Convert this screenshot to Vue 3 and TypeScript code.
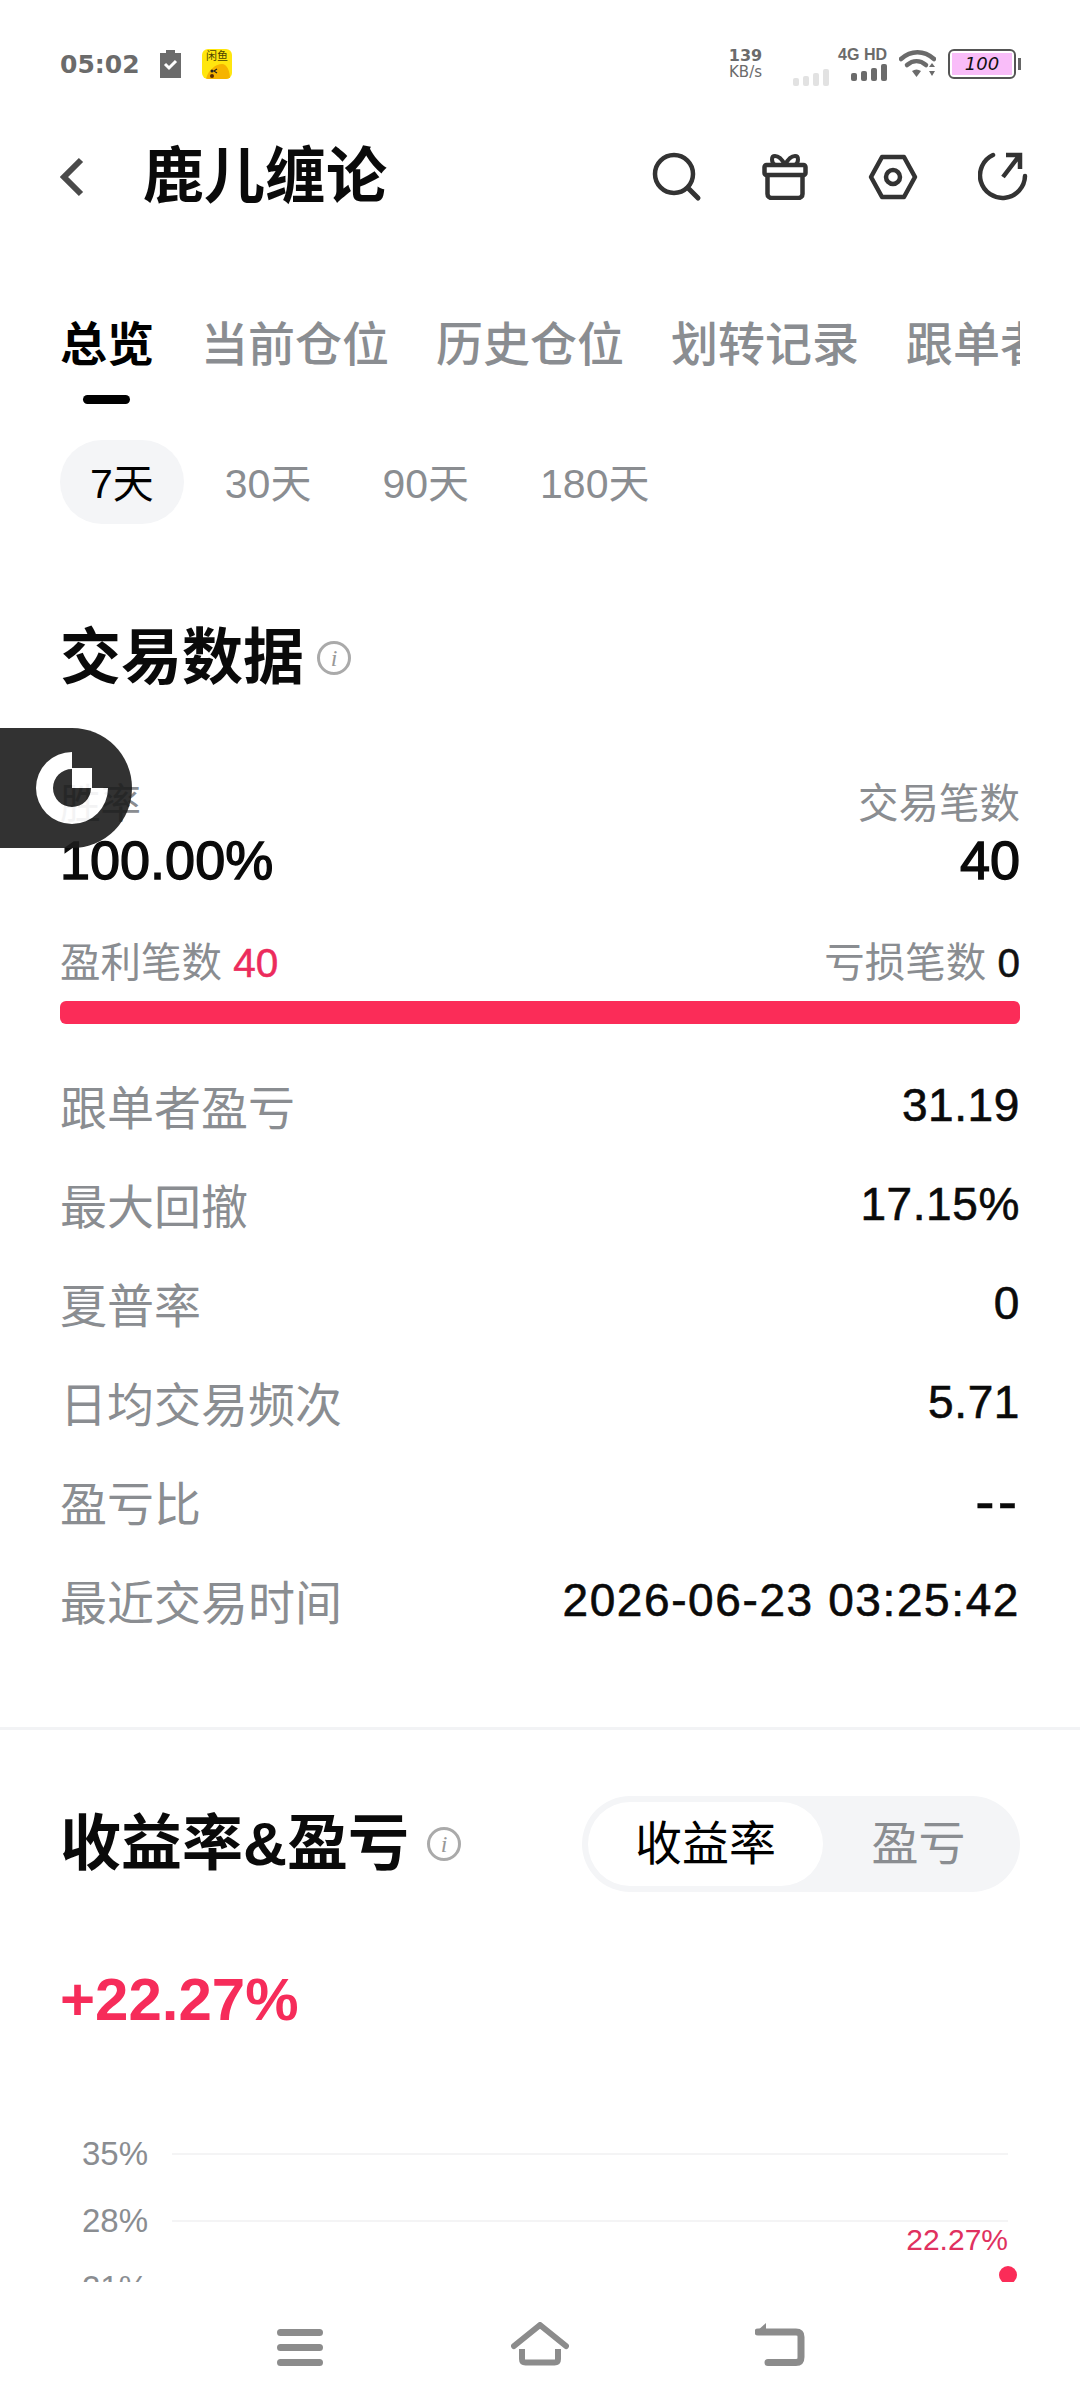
<template>
  <div class="page">
    <div class="main">
      <!-- 状态栏 -->
      <div class="status">
        <div class="status-left">
          <span class="time">05:02</span>
          <svg class="clip" width="21" height="28" viewBox="0 0 21 28">
            <path d="M0 3h6V0h9v3h6v25H0z" fill="#6b6b6b" />
            <path d="M5 14l4 4 7-7" fill="none" stroke="#fff" stroke-width="3" />
          </svg>
          <div class="fish">
            <span class="fish-name">闲鱼</span>
            <svg class="fish-face" width="30" height="15" viewBox="0 0 30 15">
              <path d="M4 15C6 6 14 0 20 0c5 0 8 7 8 15z" fill="#f6b400" />
              <circle cx="10" cy="7" r="1.5" fill="#222" />
              <path d="M15 5l-3 2 3 2" fill="none" stroke="#222" stroke-width="1.2" />
              <circle cx="10" cy="12" r="2" fill="#5b2b00" />
            </svg>
          </div>
        </div>
        <div class="status-right">
          <div class="speed"><span>139</span><span class="unit">KB/s</span></div>
          <div class="bars off">
            <i v-for="h in [8, 10, 13, 17]" :key="h" :style="{ height: h + 'px' }"></i>
          </div>
          <div class="net">
            <span>4G HD</span>
            <div class="bars">
              <i v-for="h in [8, 10, 13, 17]" :key="h" :style="{ height: h + 'px' }"></i>
            </div>
          </div>
          <svg width="37" height="30" viewBox="0 0 37 30">
            <path d="M2 10c10-9 23-9 33 0" fill="none" stroke="#6b6b6b" stroke-width="4.500" stroke-linecap="round" />
            <path d="M8 16c6-5 13-5 19 0" fill="none" stroke="#6b6b6b" stroke-width="4.500" stroke-linecap="round" />
            <path d="M13 22c3-2 6-2 9 0l-4.500 6z" fill="#6b6b6b" />
            <path d="M30 18l3-4 3 4zM30 22l3 5 3-5z" fill="#6b6b6b" />
          </svg>
          <div class="battery">
            <div class="battery-fill">100</div>
          </div>
          <div class="battery-tip"></div>
        </div>
      </div>

      <!-- 标题栏 -->
      <div class="header">
        <svg width="24" height="40" viewBox="0 0 24 40">
          <path d="M21 3L4 20l17 17" fill="none" stroke="#4a4a4a" stroke-width="6" />
        </svg>
        <h1 class="title">鹿儿缠论</h1>
        <div class="header-icons">
          <svg width="50" height="50" viewBox="0 0 50 50">
            <circle cx="22" cy="22" r="19" fill="none" stroke="#333" stroke-width="4.500" />
            <path d="M36 36l10 10" stroke="#333" stroke-width="5" stroke-linecap="round" />
          </svg>
          <svg width="46" height="46" viewBox="0 0 46 46">
            <rect x="2.500" y="11" width="41" height="10" rx="2" fill="none" stroke="#333" stroke-width="4.500" />
            <path d="M5.500 21v19c0 2.500 2 4 4 4h27c2 0 4-1.500 4-4V21" fill="none" stroke="#333" stroke-width="4.500" />
            <path d="M23 11c-3-6-7-9-10-9-4 0-4 6 0 9M23 11c3-6 7-9 10-9 4 0 4 6 0 9" fill="none" stroke="#333" stroke-width="4" />
          </svg>
          <svg width="50" height="46" viewBox="0 0 50 46">
            <path d="M14 3h22l11 20-11 20H14L3 23z" fill="none" stroke="#333" stroke-width="4.500" stroke-linejoin="round" />
            <circle cx="25" cy="23" r="7" fill="none" stroke="#333" stroke-width="4.500" />
          </svg>
          <svg width="50" height="50" viewBox="0 0 50 50">
            <path d="M15 3A22.500 22.500 0 1 0 47 24" fill="none" stroke="#333" stroke-width="4.500" stroke-linecap="round" />
            <path d="M25 25L41 4M28 3h14v14" fill="none" stroke="#333" stroke-width="4.500" />
          </svg>
        </div>
      </div>

      <!-- 标签 -->
      <div class="tabs">
        <div v-for="(t, i) in tabs" :key="t" class="tab" :class="{ active: i === 0 }">{{ t }}</div>
      </div>

      <div class="periods">
        <div v-for="(p, i) in periods" :key="p" class="period" :class="{ active: i === 0 }">{{ p }}</div>
      </div>

      <!-- 交易数据 -->
      <div class="section-title first">
        <h2>交易数据</h2>
        <span class="info">i</span>
      </div>

      <div class="summary">
        <div>
          <div class="summary-label">胜率</div>
          <div class="summary-value">100.00%</div>
        </div>
        <div class="right">
          <div class="summary-label">交易笔数</div>
          <div class="summary-value">40</div>
        </div>
      </div>

      <div class="counts">
        <span>盈利笔数 <b class="red">40</b></span>
        <span>亏损笔数 <b class="dark">0</b></span>
      </div>
      <div class="bar"></div>

      <div class="rows">
        <div v-for="r in stats" :key="r.label" class="row">
          <span class="row-label">{{ r.label }}</span>
          <span class="row-value" :class="r.kind">{{ r.value }}</span>
        </div>
      </div>

      <div class="divider"></div>

      <!-- 收益率 -->
      <div class="profit-head">
        <div class="section-title">
          <h2>收益率&amp;盈亏</h2>
          <span class="info">i</span>
        </div>
        <div class="segment">
          <div class="seg on">收益率</div>
          <div class="seg">盈亏</div>
        </div>
      </div>

      <div class="profit">+22.27%</div>

      <div class="chart">
        <div v-for="y in axis" :key="y" class="grid-row">
          <span class="axis">{{ y }}</span>
          <span class="grid-line"></span>
        </div>
        <span class="point-label">22.27%</span>
        <span class="point"></span>
      </div>

      <!-- 悬浮按钮 -->
      <div class="float">
        <svg width="72" height="72" viewBox="0 0 72 72">
          <path d="M36 0A36 36 0 1 0 72 36H55A19 19 0 1 1 36 17z" fill="#fff" />
          <rect x="36" y="16" width="20" height="20" fill="#fff" />
        </svg>
      </div>
    </div>

    <!-- 导航栏 -->
    <div class="nav">
      <div class="nav-cell">
        <svg width="46" height="37" viewBox="0 0 46 37">
          <path d="M3.500 3.500h39M3.500 18.500h39M3.500 33.500h39" stroke="#8c8c8c" stroke-width="7" stroke-linecap="round" />
        </svg>
      </div>
      <div class="nav-cell">
        <svg width="58" height="44" viewBox="0 0 58 44">
          <path d="M3 24L29 3l26 21" fill="none" stroke="#8c8c8c" stroke-width="6" stroke-linecap="round" stroke-linejoin="round" />
          <path d="M11 27v10c0 2.500 1.500 3.500 3.500 3.500h29c2 0 3.500-1 3.500-3.500V27" fill="none" stroke="#8c8c8c" stroke-width="6" />
        </svg>
      </div>
      <div class="nav-cell">
        <svg width="50" height="44" viewBox="0 0 50 44">
          <path d="M3 10h38c3.500 0 5 1.500 5 5v20c0 4-1.500 5.500-5 5.500H13" fill="none" stroke="#8c8c8c" stroke-width="7" stroke-linecap="round" />
          <path d="M11 1L1 10l10 3z" fill="#8c8c8c" />
        </svg>
      </div>
    </div>
  </div>
</template>

<script setup lang="ts">
interface StatRow {
  label: string
  value: string
  kind?: string
}

const tabs: string[] = ['总览', '当前仓位', '历史仓位', '划转记录', '跟单者']
const periods: string[] = ['7天', '30天', '90天', '180天']
const axis: string[] = ['35%', '28%', '21%']

const stats: StatRow[] = [
  { label: '跟单者盈亏', value: '31.19' },
  { label: '最大回撤', value: '17.15%' },
  { label: '夏普率', value: '0' },
  { label: '日均交易频次', value: '5.71' },
  { label: '盈亏比', value: '--', kind: 'dash' },
  { label: '最近交易时间', value: '2026-06-23 03:25:42', kind: 'date' },
]
</script>

<style>
html,
body {
  margin: 0;
  background: #fff;
}
</style>

<style scoped>
.page {
  width: 1080px;
  height: 2408px;
  display: flex;
  flex-direction: column;
  background: #fff;
  font-family: "Liberation Sans", "Noto Sans CJK SC", sans-serif;
  color: #0a0a0a;
  overflow: hidden;
}

.main {
  position: relative;
  flex: 1;
  overflow: hidden;
}

.status {
  height: 128px;
  padding: 0 59px 0 60px;
  display: flex;
  align-items: center;
  justify-content: space-between;
}

.status-left,
.status-right {
  display: flex;
  align-items: center;
}

.time {
  font-family: "DejaVu Sans", sans-serif;
  font-weight: 700;
  font-size: 25px;
  color: #6b6b6b;
  width: 100px;
}

.fish {
  width: 30px;
  height: 30px;
  margin-left: 21px;
  border-radius: 6px;
  background: #ffe60f;
  overflow: hidden;
  display: flex;
  flex-direction: column;
  align-items: center;
}

.fish-name {
  font-size: 11px;
  line-height: 15px;
  color: #4a4200;
}

.status-right {
  color: #6b6b6b;
}

.speed {
  width: 37px;
  margin-right: 29px;
  display: flex;
  flex-direction: column;
  align-items: center;
  font-family: "DejaVu Sans", sans-serif;
  font-size: 16px;
  line-height: 17px;
  font-weight: 700;
}

.unit {
  font-weight: 400;
  font-size: 15px;
}

.bars {
  display: flex;
  align-items: flex-end;
  gap: 4px;
  height: 18px;
}

.bars i {
  width: 6px;
  background: #6b6b6b;
  border-radius: 2px;
}

.bars.off {
  margin-top: 26px;
}

.bars.off i {
  background: #e2e2e2;
}

.net {
  width: 48px;
  margin-left: 10px;
  margin-right: 12px;
  display: flex;
  flex-direction: column;
  align-items: flex-end;
  font-size: 16px;
  line-height: 16px;
  font-weight: 700;
  white-space: nowrap;
}

.battery {
  margin-left: 12px;
  width: 68px;
  height: 30px;
  box-sizing: border-box;
  border: 2px solid #555;
  border-radius: 6px;
  padding: 2px;
}

.battery-fill {
  height: 100%;
  background: #f9bdf9;
  color: #111;
  font-family: "DejaVu Sans", sans-serif;
  font-style: italic;
  font-size: 18px;
  line-height: 22px;
  text-align: center;
}

.battery-tip {
  width: 3px;
  height: 12px;
  margin-left: 2px;
  background: #666;
}

.header {
  height: 96px;
  padding: 2px 52px 0 60px;
  box-sizing: border-box;
  display: flex;
  align-items: center;
}

.title {
  margin: 0 0 0 59px;
  font-size: 61px;
  line-height: 94px;
  font-weight: 700;
}

.header-icons {
  margin-left: auto;
  display: flex;
  align-items: center;
  gap: 60px;
}

.tabs {
  margin: 76px 60px 0;
  display: flex;
  gap: 47px;
  overflow: hidden;
}

.tab {
  flex: none;
  position: relative;
  height: 104px;
  font-size: 47px;
  line-height: 90px;
  font-weight: 500;
  color: #8a8d91;
}

.tab.active {
  color: #000;
  font-weight: 700;
}

.tab.active::after {
  content: "";
  position: absolute;
  left: 23px;
  bottom: 0;
  width: 47px;
  height: 9px;
  border-radius: 5px;
  background: #000;
}

.periods {
  margin: 36px 60px 0;
  display: flex;
}

.period {
  height: 84px;
  padding: 0 30px;
  margin-right: 11px;
  font-size: 41px;
  line-height: 88px;
  color: #8a8d91;
}

.period.active {
  color: #000;
  background: #f4f5f7;
  border-radius: 42px;
}

.section-title {
  display: flex;
  align-items: center;
  gap: 18px;
}

.section-title.first {
  margin: 92px 60px 0;
  gap: 13px;
}

.section-title h2 {
  margin: 0;
  font-size: 61px;
  line-height: 84px;
  font-weight: 700;
}

.info {
  width: 34px;
  height: 34px;
  box-sizing: border-box;
  border: 3px solid #aaa;
  border-radius: 50%;
  font-family: "Liberation Serif", serif;
  font-style: italic;
  font-size: 24px;
  line-height: 28px;
  text-align: center;
  color: #999;
}

.summary {
  margin: 80px 60px 0;
  display: flex;
  justify-content: space-between;
}

.right {
  text-align: right;
}

.summary-label {
  font-size: 40.500px;
  line-height: 48px;
  color: #8a8d91;
}

.summary-value {
  font-size: 54px;
  line-height: 64px;
  font-weight: 400;
  -webkit-text-stroke: 1.400px currentColor;
}

.counts {
  margin: 47px 60px 0;
  display: flex;
  justify-content: space-between;
  font-size: 40.500px;
  line-height: 48px;
  color: #8a8d91;
}

.counts b {
  font-weight: 400;
  -webkit-text-stroke: 0.500px currentColor;
}

.red {
  color: #ec2b5c;
}

.dark {
  color: #111;
}

.bar {
  margin: 14px 60px 0;
  height: 23px;
  border-radius: 6px;
  background: #fb2c58;
}

.rows {
  margin: 31px 60px 0;
}

.row {
  height: 99px;
  display: flex;
  align-items: center;
  justify-content: space-between;
  font-size: 47px;
}

.row-label {
  color: #8a8d91;
}

.row-value {
  color: #0a0a0a;
  font-size: 46px;
  letter-spacing: 0.600px;
  -webkit-text-stroke: 0.600px currentColor;
}

.row-value.date {
  letter-spacing: 1.600px;
}

.row-value.dash {
  font-size: 58px;
  letter-spacing: 3px;
}

.divider {
  margin-top: 78px;
  height: 3px;
  background: #f2f3f5;
}

.profit-head {
  margin: 66px 60px 0;
  display: flex;
  align-items: center;
  justify-content: space-between;
}

.segment {
  width: 438px;
  height: 96px;
  box-sizing: border-box;
  padding: 6px;
  border-radius: 48px;
  background: #f4f5f7;
  display: flex;
  font-size: 47px;
  line-height: 84px;
  color: #8a8d91;
}

.seg {
  flex: 1;
  text-align: center;
}

.seg.on {
  flex: none;
  width: 235px;
  background: #fff;
  border-radius: 42px;
  color: #000;
}

.profit {
  margin: 70px 60px 0;
  font-size: 60px;
  line-height: 76px;
  font-weight: 700;
  color: #f62c5a;
}

.chart {
  position: relative;
  margin: 82px 72px 0 82px;
}

.grid-row {
  height: 67px;
  display: flex;
  align-items: center;
}

.axis {
  width: 90px;
  font-size: 33px;
  color: #8a8d91;
}

.grid-line {
  flex: 1;
  height: 2px;
  background: #f4f4f5;
}

.point-label {
  position: absolute;
  right: 0;
  top: 102px;
  font-size: 30px;
  line-height: 36px;
  color: #e0315f;
}

.point {
  position: absolute;
  right: -9px;
  top: 146px;
  width: 18px;
  height: 18px;
  border-radius: 50%;
  background: #fb2c58;
}

.float {
  position: absolute;
  left: 0;
  top: 728px;
  width: 132px;
  height: 120px;
  border-radius: 0 60px 60px 0;
  background: #1c1c1c;
  opacity: 0.9;
  display: flex;
  align-items: center;
  padding-left: 36px;
  box-sizing: border-box;
}

.nav {
  height: 126px;
  display: flex;
  justify-content: center;
  align-items: flex-start;
  background: #fff;
}

.nav-cell {
  width: 240px;
  height: 84px;
  display: flex;
  align-items: flex-end;
  justify-content: center;
}
</style>
